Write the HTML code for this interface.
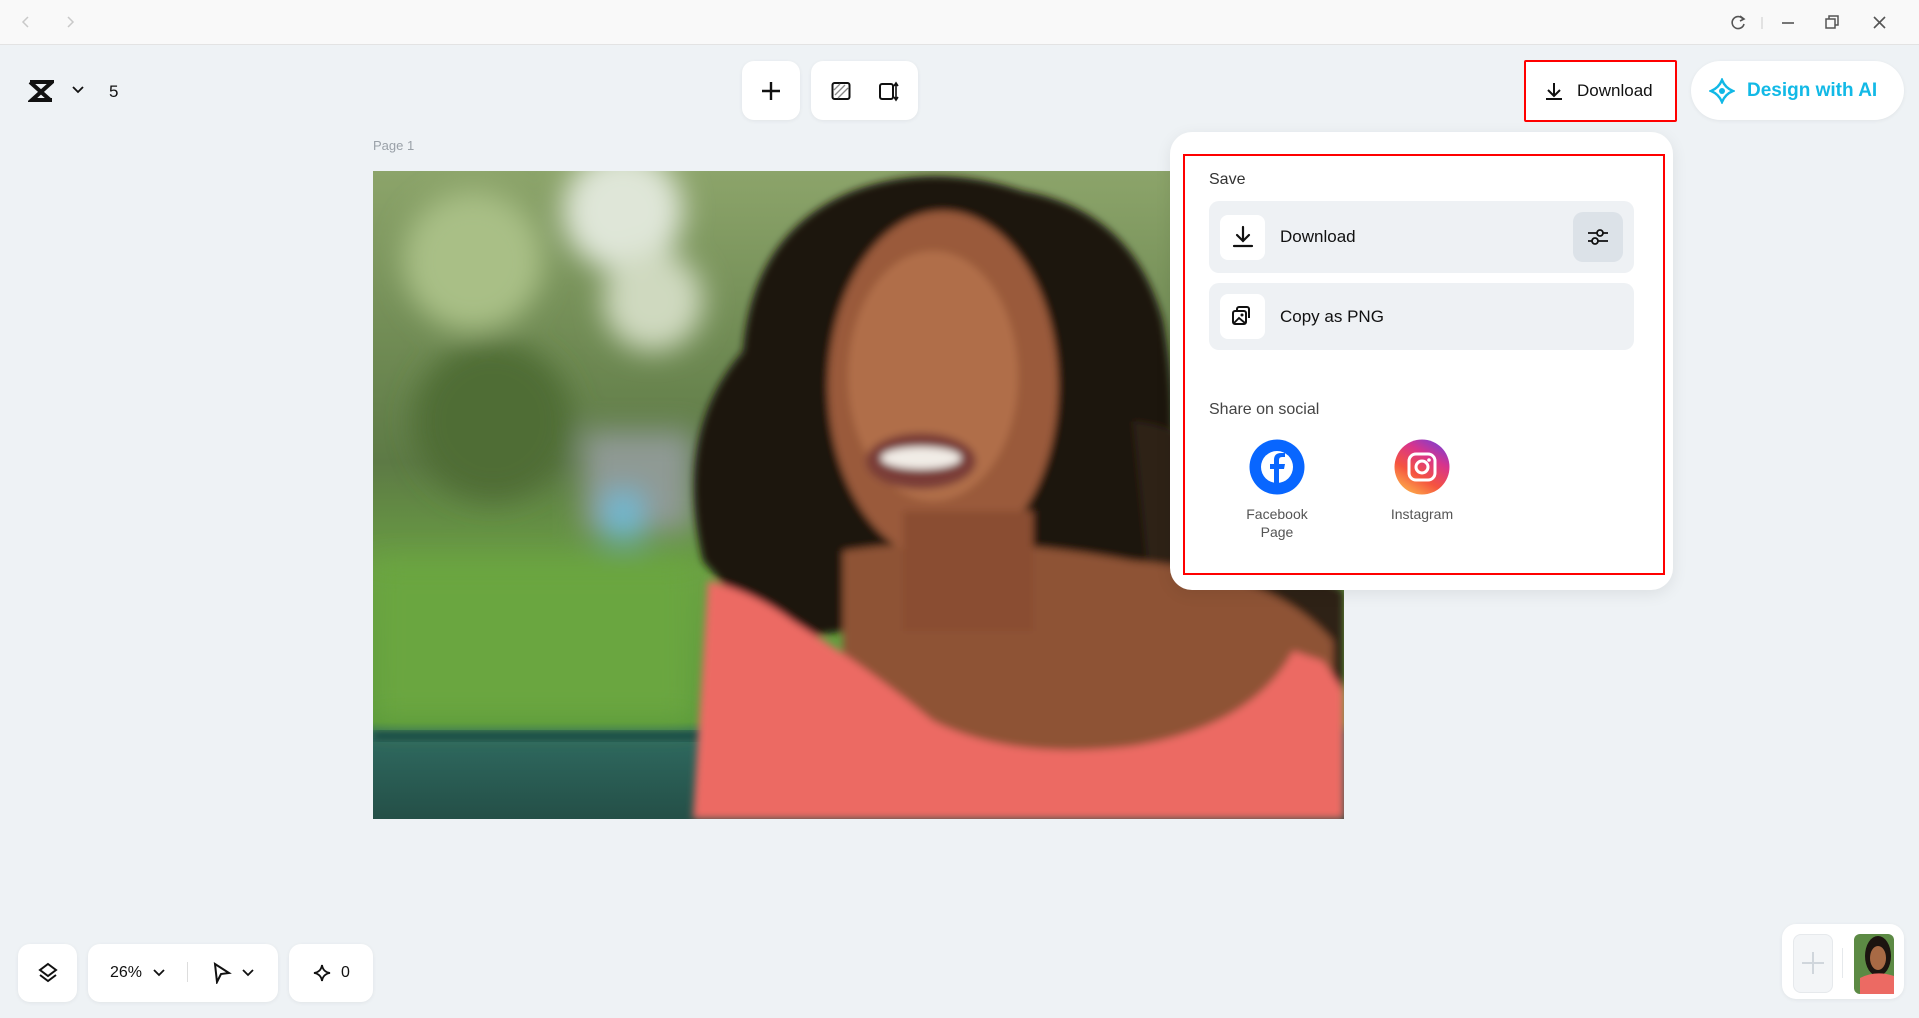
<!DOCTYPE html>
<html><head><meta charset="utf-8">
<style>
*{box-sizing:border-box;margin:0;padding:0}
body{width:1919px;height:1018px;overflow:hidden;background:#eef2f5;font-family:"Liberation Sans",sans-serif;position:relative;color:#111}
.abs{position:absolute}
.card{position:absolute;background:#fff;border-radius:12px;box-shadow:0 1px 4px rgba(0,0,0,.06)}
svg{display:block}
</style></head><body>
<div class="abs" style="left:0;top:0;width:1919px;height:45px;background:#f9f9f9;border-bottom:1px solid #e3e3e3"></div>
<svg class="abs" style="left:18px;top:14px" width="60" height="16"><path d="M10 3 L5 8 L10 13" stroke="#c9c9c9" stroke-width="1.5" fill="none"/><path d="M50 3 L55 8 L50 13" stroke="#c9c9c9" stroke-width="1.5" fill="none"/></svg>
<svg class="abs" style="left:1728px;top:13px" width="170" height="20">
<path d="M15 6 A6 6 0 1 0 16 11" stroke="#555" stroke-width="1.6" fill="none"/><path d="M12 3 L16 6 L12 8" stroke="#555" stroke-width="1.6" fill="none"/>
<line x1="34" y1="4" x2="34" y2="16" stroke="#ccc"/>
<line x1="54" y1="10" x2="66" y2="10" stroke="#555" stroke-width="1.6"/>
<rect x="98" y="6" width="9" height="9" stroke="#555" stroke-width="1.5" fill="none"/><path d="M101 6 V3 H110 V12 H107" stroke="#555" stroke-width="1.5" fill="none"/>
<path d="M146 4 L157 15 M157 4 L146 15" stroke="#555" stroke-width="1.6"/></svg>

<div class="card" style="left:15px;top:61px;width:122px;height:59px;background:#eef2f5;box-shadow:none"></div>
<svg class="abs" style="left:28px;top:80px" width="26" height="22"><path d="M2 2 H24 L4 20 H24 M2 2 L22 20" stroke="#111" stroke-width="4" fill="none"/></svg>
<svg class="abs" style="left:72px;top:86px" width="12" height="8"><path d="M1 1 L6 6 L11 1" stroke="#111" stroke-width="1.8" fill="none"/></svg>
<div class="abs" style="left:109px;top:82px;font-size:17px">5</div>

<div class="card" style="left:742px;top:61px;width:58px;height:59px"></div>
<svg class="abs" style="left:761px;top:81px" width="20" height="20"><path d="M10 1 V19 M1 10 H19" stroke="#111" stroke-width="2.4"/></svg>
<div class="card" style="left:811px;top:61px;width:107px;height:59px"></div>
<svg class="abs" style="left:831px;top:81px" width="20" height="20"><rect x="1.5" y="2" width="17" height="16" rx="2" stroke="#111" stroke-width="2" fill="none"/><path d="M4 14 L14 4 M7 17 L17 7 M3 9 L9 3" stroke="#888" stroke-width="1.3"/></svg>
<svg class="abs" style="left:877px;top:80px" width="22" height="22"><rect x="3" y="4" width="13" height="15" rx="2" stroke="#111" stroke-width="2" fill="none"/><path d="M19 4 V19 M17 6 L19 3 L21 6 M17 17 L19 20 L21 17" stroke="#111" stroke-width="1.6" fill="none"/></svg>

<div class="card" style="left:1524px;top:60px;width:153px;height:62px;border:2.5px solid #f00;border-radius:2px;box-shadow:none"></div>
<svg class="abs" style="left:1544px;top:81px" width="20" height="20"><path d="M10 2 V14 M4 9 L10 15 L16 9 M2 18 H18" stroke="#111" stroke-width="2" fill="none"/></svg>
<div class="abs" style="left:1577px;top:81px;font-size:17px">Download</div>
<div class="card" style="left:1691px;top:61px;width:213px;height:59px;border-radius:30px"></div>
<svg class="abs" style="left:1709px;top:78px" width="26" height="26"><path d="M13 2 C15 7 19 11 24 13 C19 15 15 19 13 24 C11 19 7 15 2 13 C7 11 11 7 13 2 Z" stroke="#11b8e6" stroke-width="2.4" fill="none"/><circle cx="13" cy="13" r="3" fill="#11b8e6"/></svg>
<div class="abs" style="left:1747px;top:80px;font-size:19px;font-weight:bold;color:#12b9e6">Design with AI</div>

<div class="abs" style="left:373px;top:138px;font-size:13px;color:#9aa1a8">Page 1</div>

<svg class="abs" style="left:373px;top:171px" width="971" height="648">
<defs><filter id="b" x="-20%" y="-20%" width="140%" height="140%"><feGaussianBlur stdDeviation="14"/></filter><filter id="s"><feGaussianBlur stdDeviation="4"/></filter>
<linearGradient id="bg" x1="0" y1="0" x2="0" y2="1"><stop offset="0" stop-color="#8ca46a"/><stop offset=".45" stop-color="#5d7a45"/><stop offset=".62" stop-color="#6aa043"/><stop offset=".85" stop-color="#5a9a3a"/><stop offset=".87" stop-color="#2f6a60"/><stop offset="1" stop-color="#244f47"/></linearGradient></defs>
<rect width="971" height="648" fill="url(#bg)"/>
<g filter="url(#b)">
<circle cx="100" cy="90" r="70" fill="#a9bf86"/><circle cx="250" cy="40" r="60" fill="#dfe6d8"/><circle cx="280" cy="130" r="50" fill="#cfd9bf"/>
<circle cx="120" cy="250" r="80" fill="#4f6d36"/><rect x="210" y="260" width="110" height="100" fill="#8f9a94"/><rect x="230" y="320" width="40" height="50" fill="#6fb7cf"/>
<rect x="0" y="390" width="320" height="160" fill="#6aa640"/>
</g>
<rect x="0" y="560" width="330" height="10" fill="#1f4d44" filter="url(#s)"/>
<g filter="url(#s)">
<path d="M330 390 Q300 260 370 180 Q380 60 480 20 Q560 -10 650 20 Q760 40 790 150 Q810 260 790 360 Q780 420 700 430 L400 470 Z" fill="#1c1410"/>
<path d="M760 250 Q860 260 900 380 L971 420 L971 648 L800 648 Z" fill="#2d2018"/>
<path d="M470 380 Q600 360 760 390 Q900 400 960 470 L960 620 L470 620 Z" fill="#8e5234"/>
<ellipse cx="570" cy="215" rx="115" ry="175" fill="#9a5a3a"/>
<ellipse cx="560" cy="205" rx="85" ry="125" fill="#b06e48"/>
<rect x="530" y="340" width="130" height="120" fill="#8a4e33"/>
<ellipse cx="548" cy="290" rx="55" ry="28" fill="#7a3e38"/>
<ellipse cx="548" cy="287" rx="40" ry="11" fill="#f1ece6"/>
<path d="M335 410 Q380 420 420 450 Q500 500 560 550 Q640 590 760 575 Q880 555 920 480 L950 490 L971 520 L971 648 L320 648 Z" fill="#ec6a63"/>
</g>
</svg>

<div class="card" style="left:1170px;top:132px;width:503px;height:458px;border-radius:22px;box-shadow:0 4px 16px rgba(0,0,0,.08)"></div>
<div class="abs" style="left:1183px;top:154px;width:482px;height:421px;border:2.5px solid #f00"></div>
<div class="abs" style="left:1209px;top:171px;font-size:16px;color:#333">Save</div>
<div class="abs" style="left:1209px;top:201px;width:425px;height:72px;background:#eef1f4;border-radius:10px"></div>
<div class="abs" style="left:1220px;top:215px;width:45px;height:45px;background:#fff;border-radius:8px"></div>
<svg class="abs" style="left:1231px;top:225px" width="24" height="24"><path d="M12 2 V16 M6 10 L12 16 L18 10 M3 21 H21" stroke="#111" stroke-width="2.2" fill="none" stroke-linecap="round"/></svg>
<div class="abs" style="left:1280px;top:227px;font-size:17px">Download</div>
<div class="abs" style="left:1573px;top:212px;width:50px;height:50px;background:#dce2e8;border-radius:10px"></div>
<svg class="abs" style="left:1587px;top:226px" width="22" height="22"><path d="M1 7 H21 M1 15 H21" stroke="#111" stroke-width="1.8"/><circle cx="13" cy="7" r="3" fill="#dce2e8" stroke="#111" stroke-width="1.8"/><circle cx="8" cy="15" r="3" fill="#dce2e8" stroke="#111" stroke-width="1.8"/></svg>
<div class="abs" style="left:1209px;top:283px;width:425px;height:67px;background:#eef1f4;border-radius:10px"></div>
<div class="abs" style="left:1220px;top:294px;width:45px;height:45px;background:#fff;border-radius:8px"></div>
<svg class="abs" style="left:1231px;top:305px" width="22" height="22"><rect x="2" y="6" width="13" height="13" rx="2" stroke="#111" stroke-width="2" fill="none"/><path d="M6 6 V4 A2 2 0 0 1 8 2 H16 A2 2 0 0 1 18 4 V13 M10 2 V1" stroke="#111" stroke-width="2" fill="none"/><path d="M3 18 L8 13 L14 18" stroke="#111" stroke-width="1.8" fill="none"/><circle cx="11" cy="10" r="1.5" fill="#111"/></svg>
<div class="abs" style="left:1280px;top:307px;font-size:17px">Copy as PNG</div>
<div class="abs" style="left:1209px;top:401px;font-size:16px;color:#444">Share on social</div>
<svg class="abs" style="left:1249px;top:439px" width="56" height="56"><circle cx="28" cy="28" r="27.5" fill="#0866ff"/><circle cx="28" cy="28" r="16" fill="#fff"/><path d="M30 46 V30 H35 L36 25 H30 V21 Q30 18 33 18 H36 V14 H32 Q25 14 25 21 V25 H21 V30 H25 V46 Z" fill="#0866ff"/></svg>
<svg class="abs" style="left:1394px;top:439px" width="56" height="56"><defs><linearGradient id="ig" x1="0.2" y1="1" x2="0.8" y2="0"><stop offset="0" stop-color="#fdb34b"/><stop offset=".35" stop-color="#f5543f"/><stop offset=".7" stop-color="#d8348c"/><stop offset="1" stop-color="#7b3fd2"/></linearGradient></defs><circle cx="28" cy="28" r="27.5" fill="url(#ig)"/><rect x="15" y="15" width="26" height="26" rx="7" stroke="#fff" stroke-width="3" fill="none"/><circle cx="28" cy="28" r="6" stroke="#fff" stroke-width="3" fill="none"/><circle cx="35" cy="21" r="1.8" fill="#fff"/></svg>
<div class="abs" style="left:1237px;top:505px;width:80px;text-align:center;font-size:14px;color:#555;line-height:18px">Facebook<br>Page</div>
<div class="abs" style="left:1382px;top:505px;width:80px;text-align:center;font-size:14px;color:#555;line-height:18px">Instagram</div>

<div class="card" style="left:18px;top:944px;width:59px;height:58px"></div>
<svg class="abs" style="left:37px;top:962px" width="22" height="22"><path d="M11 2 L19 8 L11 14 L3 8 Z" stroke="#111" stroke-width="2" fill="none"/><path d="M3 13 L11 19 L19 13" stroke="#111" stroke-width="2" fill="none"/></svg>
<div class="card" style="left:88px;top:944px;width:190px;height:58px"></div>
<div class="abs" style="left:110px;top:964px;font-size:16px">26%</div>
<svg class="abs" style="left:153px;top:969px" width="12" height="8"><path d="M1 1 L6 6 L11 1" stroke="#111" stroke-width="1.8" fill="none"/></svg>
<div class="abs" style="left:187px;top:962px;width:1px;height:20px;background:#ddd"></div>
<svg class="abs" style="left:212px;top:962px" width="20" height="22"><path d="M3 2 L17 11 L9 12 L5 20 Z" stroke="#111" stroke-width="2" fill="none"/></svg>
<svg class="abs" style="left:242px;top:969px" width="12" height="8"><path d="M1 1 L6 6 L11 1" stroke="#111" stroke-width="1.8" fill="none"/></svg>
<div class="card" style="left:289px;top:944px;width:84px;height:58px"></div>
<svg class="abs" style="left:313px;top:964px" width="18" height="18"><path d="M9 1 Q10 8 17 9 Q10 10 9 17 Q8 10 1 9 Q8 8 9 1 Z" stroke="#111" stroke-width="1.8" fill="none"/></svg>
<div class="abs" style="left:341px;top:964px;font-size:16px">0</div>

<div class="card" style="left:1782px;top:924px;width:122px;height:75px;border-radius:14px"></div>
<div class="abs" style="left:1793px;top:934px;width:40px;height:59px;background:#f3f5f7;border:1px solid #e6e9ec;border-radius:8px"></div>
<svg class="abs" style="left:1801px;top:951px" width="24" height="24"><path d="M12 1 V23 M1 12 H23" stroke="#d0d6dc" stroke-width="2"/></svg>
<div class="abs" style="left:1842px;top:948px;width:1px;height:30px;background:#e6e9ec"></div>
<svg class="abs" style="left:1854px;top:934px" width="40" height="60"><rect width="40" height="60" rx="6" fill="#5c8a44"/><ellipse cx="24" cy="22" rx="13" ry="20" fill="#1c1410"/><ellipse cx="24" cy="24" rx="8" ry="12" fill="#a86a45"/><path d="M6 44 Q22 36 40 42 V60 H6 Z" fill="#ec6a63"/></svg>
</body></html>
